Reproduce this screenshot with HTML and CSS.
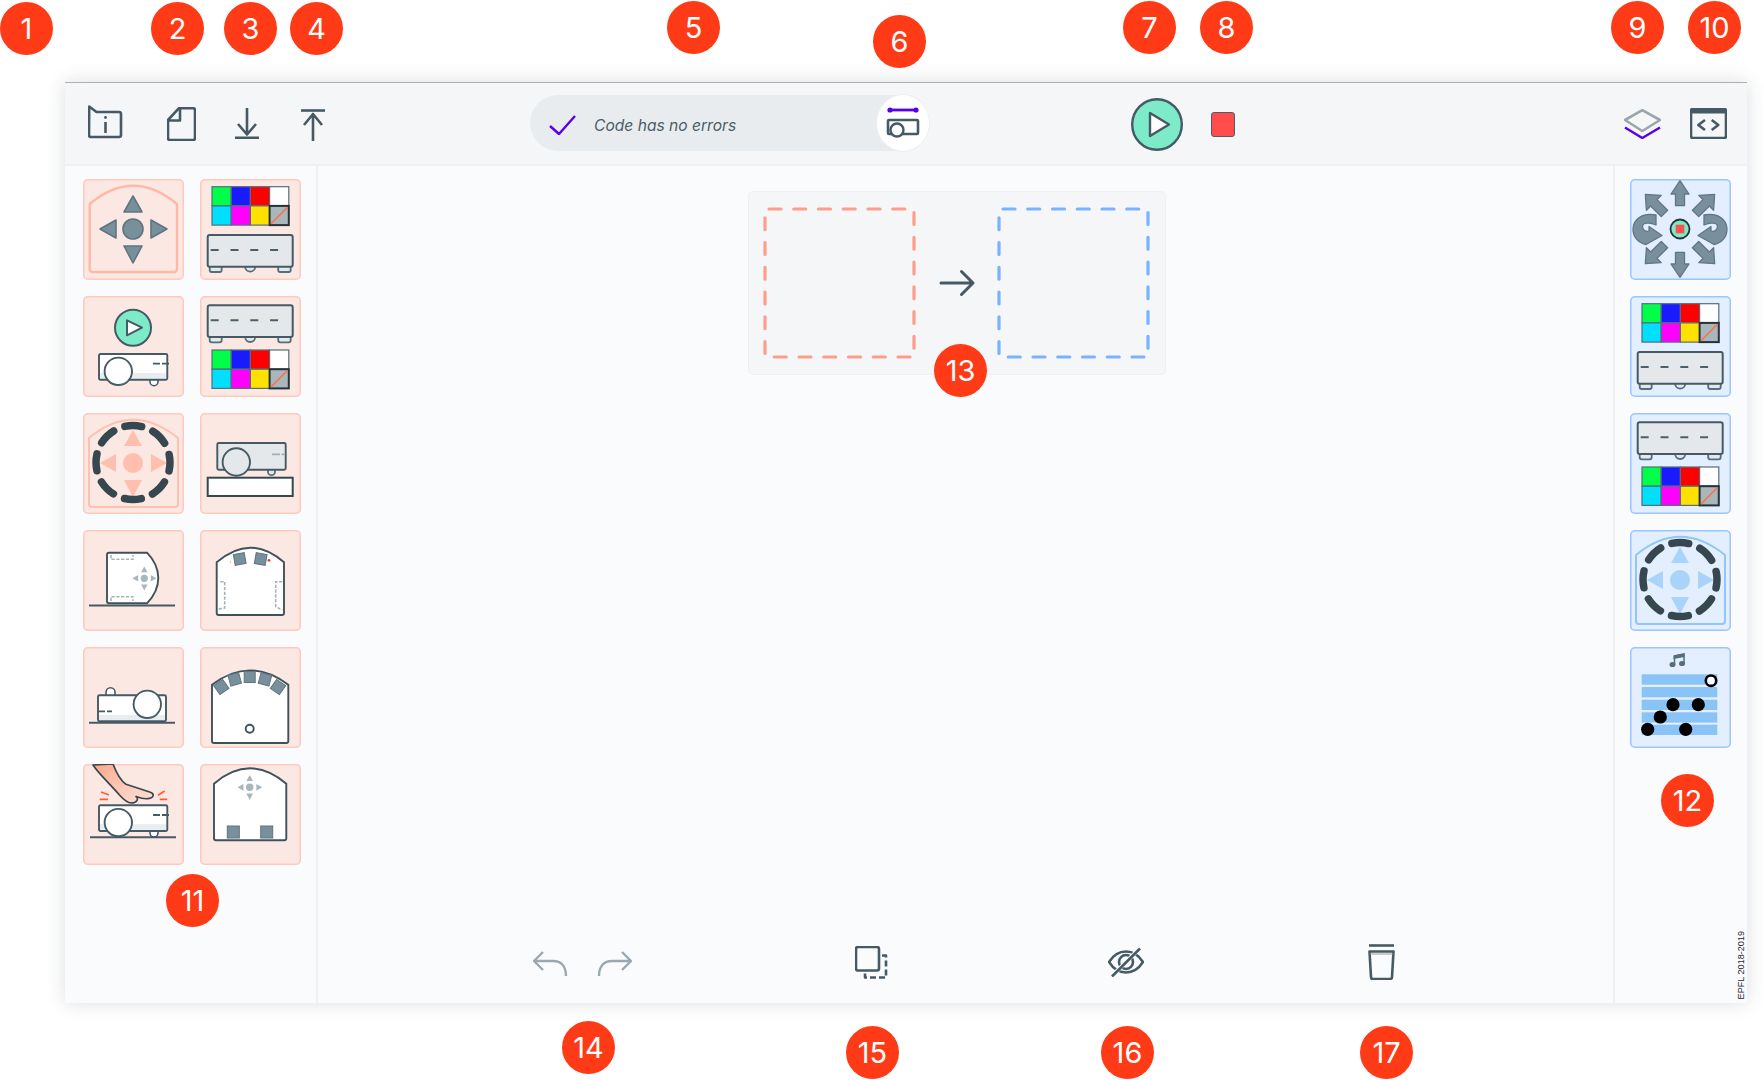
FILE: index.html
```html
<!DOCTYPE html>
<html lang="en">
<head>
<meta charset="utf-8">
<title>Thymio VPL</title>
<link rel="stylesheet" href="styles.css">
</head>
<body>
<svg class="defs" aria-hidden="true">
  <defs>
    <g id="dpad">
      <polygon points="50,17 41,33 59,33"/>
      <polygon points="50,84 41,67 59,67"/>
      <polygon points="17,50 33,41 33,59"/>
      <polygon points="84,50 68,41 68,59"/>
      <circle cx="50" cy="50" r="10"/>
    </g>
    <g id="ring">
      <circle class="ring-line" cx="50" cy="49.5" r="37"/>
    </g>
    <g id="palette">
      <rect class="c-g" x="0" y="0" width="19.2" height="19.2"/>
      <rect class="c-b" x="19.2" y="0" width="19.2" height="19.2"/>
      <rect class="c-r" x="38.4" y="0" width="19.2" height="19.2"/>
      <rect class="c-w" x="57.6" y="0" width="19.2" height="19.2"/>
      <rect class="c-c" x="0" y="19.2" width="19.2" height="19.2"/>
      <rect class="c-m" x="19.2" y="19.2" width="19.2" height="19.2"/>
      <rect class="c-y" x="38.4" y="19.2" width="19.2" height="19.2"/>
      <rect class="c-x" x="57.6" y="19.2" width="19.2" height="19.2"/>
      <line class="c-slash" x1="59" y1="37" x2="75.5" y2="20.5"/>
    </g>
    <g id="rtop">
      <path class="r-foot" d="M2,31.7 V35 a2,2 0 0 0 2,2 H12 a2,2 0 0 0 2,-2 V31.7"/>
      <path class="r-foot" d="M37.5,31.7 a5,5 0 0 0 10,0"/>
      <path class="r-foot" d="M70.5,31.7 V35 a2,2 0 0 0 2,2 H81 a2,2 0 0 0 2,-2 V31.7"/>
      <rect class="r-body" x="0" y="0" width="85" height="31.7" rx="2"/>
      <line class="r-dash" x1="3" y1="15" x2="82" y2="15"/>
    </g>
    <g id="proj">
      <path class="p-foot" d="M51,25.7 v2 a4,4 0 0 0 8,0 v-2"/>
      <rect class="p-body" x="0" y="0" width="68.3" height="25.7" rx="1.5"/>
      <path class="p-shade" d="M1,19 H67.5 V24.5 H1 Z"/>
      <rect class="p-line" x="0" y="0" width="68.3" height="25.7" rx="1.5"/>
      <circle class="p-lens" cx="19.3" cy="17.3" r="13.7"/>
      <path class="p-lensshade" d="M29,9 a13.7,13.7 0 0 1 -11,22 a14,14 0 0 0 11,-22 Z"/>
      <line class="p-dash" x1="54" y1="9.7" x2="70" y2="9.7"/>
    </g>
    <g id="arrow">
      <polygon points="0,-48.3 9,-35 4.5,-35 4.5,-23.3 -4.5,-23.3 -4.5,-35 -9,-35"/>
    </g>
    <g id="arrow-d">
      <polygon points="0,-49 10.5,-37 4.5,-37 4.5,-22 -4.5,-22 -4.5,-37 -10.5,-37"/>
    </g>
    <g id="turn">
      <path d="M74,36 C88,33 97,41 97,50 C97,58 92,64 84,65.5 L68,56.5 L81,47.5 L81,52 C84,53 87.5,51 87.5,47.5 C87.5,43.5 80,43 74,46 Z"/>
    </g>
  </defs>
</svg>

<main class="window">
  <header class="topbar">
    <svg class="ic m-info" width="35" height="34" viewBox="0 0 35 34">
      <path class="ln" d="M1.2,1.5 L8.5,7 H31 a2,2 0 0 1 2,2 V30 a2,2 0 0 1 -2,2 H3 a2,2 0 0 1 -2,-2 Z"/>
      <line class="ln" x1="17.5" y1="17" x2="17.5" y2="28"/>
      <circle class="ink" cx="17.5" cy="12.5" r="1.4"/>
    </svg>
    <svg class="ic m-doc" width="29" height="34" viewBox="0 0 29 34">
      <path class="ln" d="M12,1.2 H26 a2,2 0 0 1 2,2 V31 a2,2 0 0 1 -2,2 H3 a2,2 0 0 1 -2,-2 V13 Z"/>
      <path class="ln" d="M13,1.2 V13.5 H1"/>
    </svg>
    <svg class="ic m-down" width="24" height="31" viewBox="0 0 24 31">
      <path class="ln" d="M12,0 V26.5 M3,16 L12,26.5 L21,16"/>
      <line class="ln" x1="0" y1="29.8" x2="24" y2="29.8"/>
    </svg>
    <svg class="ic m-up" width="24" height="32" viewBox="0 0 24 32">
      <path class="ln" d="M12,32 V5 M3,16 L12,5 L21,16"/>
      <line class="ln" x1="0" y1="1.5" x2="24" y2="1.5"/>
    </svg>

    <div class="status">
      <svg class="check" width="27" height="20" viewBox="0 0 27 20">
        <path class="ln-v" d="M1,11 L10,19 L26,1"/>
      </svg>
      <span class="status-text">Code has no errors</span>
      <div class="sensor">
        <svg width="34" height="32" viewBox="0 0 34 32">
          <line class="ln-v bar" x1="5" y1="3" x2="29" y2="3"/>
          <circle class="viol" cx="4" cy="3" r="2.6"/>
          <circle class="viol" cx="30" cy="3" r="2.6"/>
          <rect class="ln" x="2" y="13" width="30" height="14" rx="1"/>
          <circle class="lens-w" cx="11" cy="23" r="6.5"/>
        </svg>
      </div>
    </div>

    <svg class="ic m-play" width="52" height="53" viewBox="0 0 52 53">
      <ellipse class="play-disc" cx="26" cy="26.5" rx="24.8" ry="25.3"/>
      <path class="play-tri" d="M19,15 V38 L38,26.5 Z"/>
    </svg>
    <div class="stop"></div>

    <svg class="ic m-layers" width="37" height="30" viewBox="0 0 37 30">
      <path class="ln-g" d="M18.3,1.2 L36,11 L18.3,22 L1,11 Z"/>
      <path class="ln-v" d="M1,18.5 L18.3,29 L36,18.5"/>
    </svg>
    <svg class="ic m-code" width="37" height="31" viewBox="0 0 37 31">
      <rect class="ln" x="1" y="1" width="35" height="29" rx="2"/>
      <rect class="ink" x="1" y="1" width="35" height="4.5"/>
      <path class="ln" d="M15,12 L8.3,17 L15,22 M21.7,12 L28.3,17 L21.7,22"/>
    </svg>
  </header>

  <div class="workspace">
    <aside class="panel-left">
      <div class="tile tile-red">
        <svg class="art" viewBox="0 0 101 101">
          <path class="dome-red" d="M6.7,25 Q50,-11.6 94,25 V90 a3,3 0 0 1 -3,3 H9.7 a3,3 0 0 1 -3,-3 Z"/>
          <use class="dp-solid" href="#dpad"/>
        </svg>
      </div>
      <div class="tile tile-red">
        <svg class="art" viewBox="0 0 101 101">
          <use href="#palette" x="12" y="7.7"/>
          <use href="#rtop" x="7.7" y="56"/>
        </svg>
      </div>
      <div class="tile tile-red">
        <svg class="art" viewBox="0 0 101 101">
          <circle class="play-disc small" cx="50" cy="31.7" r="18"/>
          <path class="play-tri small" d="M44,24.3 V39.3 L59,31.7 Z"/>
          <use href="#proj" x="16" y="58"/>
        </svg>
      </div>
      <div class="tile tile-red">
        <svg class="art" viewBox="0 0 101 101">
          <use href="#rtop" x="7.7" y="9.3"/>
          <use href="#palette" x="12" y="54"/>
        </svg>
      </div>
      <div class="tile tile-red">
        <svg class="art" viewBox="0 0 101 101">
          <path class="dome-red-thin" d="M6,25 Q50,-11.6 95,25 V91 a3,3 0 0 1 -3,3 H9 a3,3 0 0 1 -3,-3 Z"/>
          <use class="dp-pale-red" href="#dpad"/>
          <use href="#ring"/>
        </svg>
      </div>
      <div class="tile tile-red">
        <svg class="art" viewBox="0 0 101 101">
          <path class="r-foot" d="M68,56.7 v2 a3.5,3.5 0 0 0 7,0 v-2"/>
          <rect class="f-body" x="17.3" y="30" width="68.4" height="26.7" rx="1.5"/>
          <circle class="f-body" cx="36.3" cy="49" r="13.7"/>
          <line class="f-dash" x1="72" y1="41.3" x2="84.5" y2="41.3"/>
          <rect class="box" x="7.7" y="64.7" width="85" height="18.3"/>
        </svg>
      </div>
      <div class="tile tile-red">
        <svg class="art" viewBox="0 0 101 101">
          <path class="d-body" d="M26,22.7 H64 C72,31 75.3,39 75.3,48 C75.3,57 72,65 64,73.3 H26 a2,2 0 0 1 -2,-2 V24.7 a2,2 0 0 1 2,-2 Z"/>
          <path class="g-dash" d="M28,25 V29.3 H50 V25 M28,71 V66.7 H50 V71"/>
          <use class="dp-gray" href="#dpad" transform="translate(61.3,48.3) scale(.36) translate(-50,-50)"/>
          <line class="ground" x1="6" y1="75.5" x2="92" y2="75.5"/>
        </svg>
      </div>
      <div class="tile tile-red">
        <svg class="art" viewBox="0 0 101 101">
          <path class="d-body" d="M16.7,32.3 Q50.3,3 84,32.3 V83 a2,2 0 0 1 -2,2 H18.7 a2,2 0 0 1 -2,-2 Z"/>
          <rect class="sq" x="34.2" y="23.5" width="11" height="11" transform="rotate(-10 39.7 29)"/>
          <rect class="sq" x="55.2" y="23.5" width="11" height="11" transform="rotate(10 60.7 29)"/>
          <circle class="led" cx="69" cy="30.3" r="1.4"/>
          <circle class="led" cx="30.3" cy="32" r=".5"/>
          <path class="g-dash" d="M20.3,51.7 H24.7 V78 L18,79 M82.3,51.7 H75.7 V76.7 L82.3,80"/>
        </svg>
      </div>
      <div class="tile tile-red">
        <svg class="art" viewBox="0 0 101 101">
          <path class="p-foot" d="M23,48.3 v-3 a4.5,4.5 0 0 1 9,0 v3"/>
          <rect class="p-body" x="15" y="48.3" width="68" height="26" rx="1.5"/>
          <path class="p-shade" d="M16,68 H82 V73.3 H16 Z"/>
          <rect class="p-line" x="15" y="48.3" width="68" height="26" rx="1.5"/>
          <circle class="p-lens" cx="64.3" cy="57.3" r="13.7"/>
          <path class="p-lensshade" d="M74,49 a13.7,13.7 0 0 1 -11,22 a14,14 0 0 0 11,-22 Z"/>
          <line class="p-dash" x1="15" y1="64.3" x2="29" y2="64.3"/>
          <line class="ground" x1="6" y1="75.7" x2="92" y2="75.7"/>
        </svg>
      </div>
      <div class="tile tile-red">
        <svg class="art" viewBox="0 0 101 101">
          <path class="d-body" d="M12,37.7 Q50,9 88.3,37.7 V94 a2,2 0 0 1 -2,2 H14 a2,2 0 0 1 -2,-2 Z"/>
          <rect class="sq" x="15.8" y="34.5" width="11" height="11" transform="rotate(-35 21.3 40)"/>
          <rect class="sq" x="29.2" y="26.8" width="11" height="11" transform="rotate(-15 34.7 32.3)"/>
          <rect class="sq" x="44.2" y="24.5" width="11" height="11"/>
          <rect class="sq" x="59.5" y="26.8" width="11" height="11" transform="rotate(15 65 32.3)"/>
          <rect class="sq" x="72.5" y="34.5" width="11" height="11" transform="rotate(35 78 40)"/>
          <circle class="d-body" cx="49.7" cy="81.7" r="4"/>
        </svg>
      </div>
      <div class="tile tile-red">
        <svg class="art" viewBox="0 0 101 101">
          <defs>
            <linearGradient id="hand-fill" x1="0" y1="0" x2="1" y2="1">
              <stop offset="0" stop-color="#ffa68a"/>
              <stop offset=".55" stop-color="#ffc9b6"/>
              <stop offset="1" stop-color="#fde0d6"/>
            </linearGradient>
          </defs>
          <path class="hand" d="M10,1 C16,10 25,18 36.7,31.3 C40,35 44,39 48.3,39 C54,39 56,34.7 53,32.5 C57,34 62,35 65,34.7 C71,34 72,29.5 66.7,28 L43,20.3 C38,17 33,8 30,0 Z"/>
          <path class="spark" d="M18,28 L26,31 M16.7,35.3 H25 M75,31.3 L81.7,27 M76.7,35.3 H84.3"/>
          <use href="#proj" x="16" y="41.3"/>
          <line class="ground" x1="7" y1="73.3" x2="93" y2="73.3"/>
        </svg>
      </div>
      <div class="tile tile-red">
        <svg class="art" viewBox="0 0 101 101">
          <path class="d-body" d="M14,19.7 Q50,-11 86.3,19.7 V74.3 a2,2 0 0 1 -2,2 H16 a2,2 0 0 1 -2,-2 Z"/>
          <use class="dp-gray" href="#dpad" transform="translate(49.7,23.3) scale(.37) translate(-50,-50)"/>
          <rect class="sq" x="27.3" y="62" width="12" height="12"/>
          <rect class="sq" x="60.7" y="62" width="12" height="12"/>
        </svg>
      </div>
    </aside>

    <section class="canvas">
      <div class="rule-card">
        <svg class="drop" width="153" height="152" viewBox="0 0 153 152">
          <rect class="dash-red" x="2" y="2" width="149" height="148"/>
        </svg>
        <svg class="rule-arrow" width="81" height="152" viewBox="0 0 81 152">
          <path class="ln-arrow" d="M25,76 H57 M45.5,64.5 L57,76 L45.5,87.5"/>
        </svg>
        <svg class="drop" width="153" height="152" viewBox="0 0 153 152">
          <rect class="dash-blue" x="2" y="2" width="149" height="148"/>
        </svg>
      </div>
      <div class="bottombar">
        <svg class="b-undo" width="35" height="25" viewBox="0 0 35 25">
          <path class="ln-off" d="M10,1 L1,10 L10,19 M1,10 H20 C28,10 33,15 33,25"/>
        </svg>
        <svg class="b-redo" width="35" height="25" viewBox="0 0 35 25">
          <path class="ln-off" d="M25,1 L34,10 L25,19 M34,10 H15 C7,10 2,15 2,25"/>
        </svg>
        <svg class="b-dup" width="33" height="33" viewBox="0 0 33 33">
          <rect class="ln" x="1" y="1" width="23" height="23.5" rx="2"/>
          <path class="ln dashes" d="M27,9.5 H31 V31.5 H10 V26"/>
        </svg>
        <svg class="b-eye" width="36" height="30" viewBox="0 0 36 30">
          <path class="ln" d="M1,15 C6,7 12,4.5 18,4.5 C24,4.5 30,7 35,15 C30,23 24,25.5 18,25.5 C12,25.5 6,23 1,15 Z"/>
          <circle class="ln" cx="18" cy="15" r="7"/>
          <line class="ln-cut" x1="4" y1="29" x2="32" y2="1"/>
          <line class="ln" x1="4" y1="29.5" x2="32" y2="1.5"/>
        </svg>
        <svg class="b-trash" width="27" height="36" viewBox="0 0 27 36">
          <line class="ln" x1="1" y1="1.5" x2="26" y2="1.5"/>
          <path class="ln" d="M1.5,7.5 H25.5 L24,33 a2,2 0 0 1 -2,2 H5 a2,2 0 0 1 -2,-2 Z"/>
          <line class="ln-thin" x1="2" y1="10" x2="25" y2="10"/>
        </svg>
      </div>
    </section>

    <aside class="panel-right">
      <div class="tile tile-blue">
        <svg class="art" viewBox="0 0 101 101">
          <g class="arrows">
            <use href="#arrow" transform="translate(50,50)"/>
            <use href="#arrow-d" transform="translate(50,50) rotate(45)"/>
            <use href="#arrow-d" transform="translate(50,50) rotate(135)"/>
            <use href="#arrow" transform="translate(50,50) rotate(180)"/>
            <use href="#arrow-d" transform="translate(50,50) rotate(225)"/>
            <use href="#arrow-d" transform="translate(50,50) rotate(315)"/>
            <use href="#turn"/>
            <use href="#turn" transform="translate(100,0) scale(-1,1)"/>
          </g>
          <circle class="core" cx="50" cy="50" r="9.5"/>
          <rect class="core-sq" x="45.7" y="45.7" width="8.6" height="8.6"/>
        </svg>
      </div>
      <div class="tile tile-blue">
        <svg class="art" viewBox="0 0 101 101">
          <use href="#palette" x="12" y="7.7"/>
          <use href="#rtop" x="7.7" y="56"/>
        </svg>
      </div>
      <div class="tile tile-blue">
        <svg class="art" viewBox="0 0 101 101">
          <use href="#rtop" x="7.7" y="9.3"/>
          <use href="#palette" x="12" y="54"/>
        </svg>
      </div>
      <div class="tile tile-blue">
        <svg class="art" viewBox="0 0 101 101">
          <path class="dome-blue" d="M6,25 Q50,-11.6 95,25 V91 a3,3 0 0 1 -3,3 H9 a3,3 0 0 1 -3,-3 Z"/>
          <use class="dp-pale-blue" href="#dpad"/>
          <use href="#ring"/>
        </svg>
      </div>
      <div class="tile tile-blue">
        <svg class="art" viewBox="0 0 101 101">
          <path class="note" d="M44,9 L54,7 V17"/>
          <path class="beam" d="M43.5,8.5 L54.5,6.5 V10 L43.5,12 Z"/>
          <ellipse class="note-head" cx="42.5" cy="17.5" rx="3" ry="2.6"/>
          <ellipse class="note-head" cx="52" cy="16.5" rx="3" ry="2.6"/>
          <line class="note" x1="44.5" y1="9" x2="44.5" y2="17"/>
          <rect class="stripe" x="11.7" y="27.3" width="75.6" height="10.4"/>
          <rect class="stripe" x="11.7" y="40" width="75.6" height="10.3"/>
          <rect class="stripe" x="11.7" y="52.7" width="75.6" height="10.3"/>
          <rect class="stripe" x="11.7" y="65.3" width="75.6" height="10.3"/>
          <rect class="stripe" x="11.7" y="77.7" width="75.6" height="10.3"/>
          <circle class="dot" cx="43" cy="57.7" r="6.6"/>
          <circle class="dot" cx="68.3" cy="57.7" r="6.6"/>
          <circle class="dot" cx="30.3" cy="70" r="6.6"/>
          <circle class="dot" cx="17.7" cy="82.3" r="6.6"/>
          <circle class="dot" cx="55.7" cy="82.3" r="6.6"/>
          <circle class="dot-open" cx="81" cy="33.7" r="5.2"/>
        </svg>
      </div>
      <div class="copyright">EPFL 2018-2019</div>
    </aside>
  </div>
</main>

<span class="badge b1">1</span>
<span class="badge b2">2</span>
<span class="badge b3">3</span>
<span class="badge b4">4</span>
<span class="badge b5">5</span>
<span class="badge b6">6</span>
<span class="badge b7">7</span>
<span class="badge b8">8</span>
<span class="badge b9">9</span>
<span class="badge b10">10</span>
<span class="badge b11">11</span>
<span class="badge b12">12</span>
<span class="badge b13">13</span>
<span class="badge b14">14</span>
<span class="badge b15">15</span>
<span class="badge b16">16</span>
<span class="badge b17">17</span>
</body>
</html>
```

FILE: styles.css
```css
* { box-sizing: border-box; }

html, body {
  margin: 0;
  width: 1764px;
  height: 1080px;
  overflow: hidden;
  background: #fff;
  font-family: Inter, "Liberation Sans", sans-serif;
}

body { position: relative; padding: 82px 0 0 65px; }

svg { display: block; flex: none; }
.defs { display: none; }

/* window */
.window {
  width: 1682px;
  height: 921px;
  display: flex;
  flex-direction: column;
  background: #fafbfd;
  border-top: 1px solid #adafb0;
  box-shadow: 0 0 18px rgba(40, 50, 60, .16);
}

/* top bar */
.topbar {
  flex: none;
  height: 83px;
  display: flex;
  align-items: center;
  background: #f5f6f8;
  border-bottom: 2px solid #eef0f3;
  padding-right: 20px;
}

.m-info { margin-left: 23px; margin-bottom: 3px; }
.m-doc { margin-left: 44px; margin-top: 1px; }
.m-down { margin-bottom: 1px; margin-left: 39px; }
.m-up { margin-left: 42px; margin-top: 3px; }
.m-play { margin-left: 202px; margin-top: 1px; }
.m-layers { margin-left: auto; }
.m-code { margin-left: 29px; }

.status {
  margin-left: 205px;
  margin-bottom: 1px;
  width: 399px;
  height: 56px;
  display: flex;
  align-items: center;
  border-radius: 28px;
  background: #e9ecef;
}
.check { margin-left: 19px; margin-top: 3px; }
.status-text {
  margin-left: 18px;
  margin-top: 4px;
  font-size: 15.6px;
  font-style: italic;
  color: #4c5c66;
  white-space: nowrap;
}
.sensor {
  margin-left: auto;
  width: 52px;
  height: 56px;
  display: flex;
  align-items: center;
  justify-content: center;
  border-radius: 50%;
  background: #fff;
  box-shadow: 0 0 0 1px #eceef0;
}

.stop {
  flex: none;
  margin-left: 28px;
  margin-top: 2px;
  width: 24px;
  height: 25px;
  border-radius: 3px;
  background: #ff4d4d;
  border: 1.5px solid #4b5f6a;
}

/* workspace */
.workspace { flex: 1; min-height: 0; display: flex; }

.panel-left {
  flex: none;
  width: 253px;
  padding: 13px 16px 0 18px;
  border-right: 2px solid #eef0f3;
  display: grid;
  grid-template-columns: 101px 101px;
  grid-auto-rows: 101px;
  gap: 16px;
}

.panel-right {
  flex: none;
  width: 134px;
  padding: 13px 0 4px 15px;
  border-left: 2px solid #eef0f3;
  display: flex;
  flex-direction: column;
  gap: 16px;
}

.tile { flex: none; width: 101px; height: 101px; border-radius: 5px; }
.tile-red { background: #fce8e3; box-shadow: inset 0 0 0 1.5px #ffc9bd; }
.tile-blue { background: #e3eeff; box-shadow: inset 0 0 0 1.5px #9cc6ff; }
.art { width: 101px; height: 101px; }

.copyright {
  margin-top: auto;
  align-self: flex-end;
  writing-mode: vertical-rl;
  transform: rotate(180deg);
  font-family: "Liberation Sans", Arial, sans-serif;
  font-size: 9.1px;
  line-height: 11px;
  color: #1c252a;
  white-space: nowrap;
}

/* canvas */
.canvas {
  flex: 1;
  min-width: 0;
  display: flex;
  flex-direction: column;
}

.rule-card {
  margin: 25px 0 0 430px;
  width: 418px;
  height: 184px;
  padding: 15px 14px;
  display: flex;
  border: 1px solid #eff0f2;
  border-radius: 5px;
  background: #f5f6f8;
}

.bottombar {
  margin-top: auto;
  padding: 0 0 23px 215px;
  display: flex;
  align-items: center;
}
.b-redo { margin-left: 29px; margin-top: 2px; }
.b-undo { margin-top: 2px; }
.b-dup { margin-left: 223px; }
.b-eye { margin-left: 220px; }
.b-trash { margin-left: 224px; }

/* line styles */
.ln, .ln-v, .ln-g, .ln-off, .ln-arrow, .ln-thin, .ln-cut {
  fill: none;
  stroke-linejoin: round;
}
.ln { stroke: #455a64; stroke-width: 2.6; }
.ln-thin { stroke: #8d9ca5; stroke-width: 1; }
.ln-cut { stroke: #fafbfd; stroke-width: 4; }
.ln-v { stroke: #5a00e6; stroke-width: 2.4; }
.ln-v.bar { stroke-width: 2.8; }
.ln-g { stroke: #9aa6ac; stroke-width: 2.6; }
.ln-off { stroke: #9ba8af; stroke-width: 2.4; }
.ln-arrow { stroke: #455a64; stroke-width: 3; stroke-linecap: round; }
.ink { fill: #455a64; }
.viol { fill: #5a00e6; }
.lens-w { fill: #fff; stroke: #455a64; stroke-width: 2.4; }
.dashes { stroke-dasharray: 6 3; }

.play-disc { fill: #7debc8; stroke: #455a64; stroke-width: 2.4; }
.play-tri { fill: #fff; stroke: #455a64; stroke-width: 2.4; stroke-linejoin: round; }
.play-disc.small, .play-tri.small { stroke-width: 2; }

.dash-red, .dash-blue {
  fill: none;
  stroke-width: 3.2;
  stroke-linecap: round;
  stroke-dasharray: 12 12.75;
  stroke-dashoffset: 20.75;
}
.dash-red { stroke: #ff9d8b; }
.dash-blue { stroke: #79b2ff; }

/* tile art */
.dome-red { fill: none; stroke: #ffb8a6; stroke-width: 2.4; }
.dome-red-thin { fill: none; stroke: #ffc0af; stroke-width: 2; }
.dome-blue { fill: none; stroke: #92c6fa; stroke-width: 2; }
.dp-solid { fill: #78909c; stroke: #5f7482; stroke-width: 1.6; stroke-linejoin: round; }
.dp-pale-red { fill: #ffbfae; }
.dp-pale-blue { fill: #a8d3fa; }
.dp-gray { fill: #aab6bd; }
.ring-line {
  fill: none;
  stroke: #37474f;
  stroke-width: 7.5;
  stroke-linecap: round;
  stroke-dasharray: 17 12.06;
  stroke-dashoffset: 8.5;
}

.c-g, .c-b, .c-r, .c-w, .c-c, .c-m, .c-y { stroke: #546e7a; stroke-width: 1.2; }
.c-g { fill: #00ff48; }
.c-b { fill: #1a1aff; }
.c-r { fill: #ff0000; }
.c-w { fill: #fff; }
.c-c { fill: #00dfff; }
.c-m { fill: #ff00ff; }
.c-y { fill: #ffe100; }
.c-x { fill: #a9b6bc; stroke: #263238; stroke-width: 2; }
.c-slash { stroke: #ff7043; stroke-width: 1.6; }

.r-body { fill: #e4e8ea; stroke: #455a64; stroke-width: 2; }
.r-foot { fill: #e4e8ea; stroke: #546e7a; stroke-width: 1.8; }
.r-dash { stroke: #4c606b; stroke-width: 2; stroke-dasharray: 8 11.8; }

.p-foot { fill: #fff; stroke: #455a64; stroke-width: 1.6; }
.p-body { fill: #fff; }
.p-shade { fill: #e9edef; }
.p-line { fill: none; stroke: #455a64; stroke-width: 1.9; }
.p-lens { fill: #fff; stroke: #455a64; stroke-width: 1.9; }
.p-lensshade { fill: #dfe4e7; }
.p-dash { stroke: #455a64; stroke-width: 1.8; stroke-dasharray: 7 2; }

.f-body { fill: #e4e8ea; stroke: #455a64; stroke-width: 1.9; }
.f-dash { stroke: #a2afb6; stroke-width: 1.8; stroke-dasharray: 8 1.5; }
.box { fill: #fff; stroke: #37474f; stroke-width: 2; }

.d-body { fill: #fff; stroke: #3f525c; stroke-width: 1.9; }
.g-dash { fill: none; stroke: #a5b2b9; stroke-width: 1.6; stroke-dasharray: 3.2 1.6; }
.ground { stroke: #455a64; stroke-width: 1.9; }
.sq { fill: #78909c; stroke: #5f7482; stroke-width: 1; }
.led { fill: #ff3a17; }

.hand { fill: url(#hand-fill); stroke: #37474f; stroke-width: 1.7; stroke-linejoin: round; }
.spark { fill: none; stroke: #ff5a36; stroke-width: 1.7; }

.arrows { fill: #7a8f9c; stroke: #5f7684; stroke-width: 1.3; stroke-linejoin: round; }
.core { fill: #7debc8; stroke: #263238; stroke-width: 1.8; }
.core-sq { fill: #ff5050; }

.stripe { fill: #8ac3f5; }
.dot { fill: #000; }
.dot-open { fill: #fff; stroke: #000; stroke-width: 2.6; }
.note { fill: none; stroke: #546e7a; stroke-width: 1.5; }
.beam, .note-head { fill: #546e7a; }

/* callout badges */
.badge {
  position: absolute;
  width: 53px;
  height: 53px;
  display: flex;
  align-items: center;
  justify-content: center;
  border-radius: 50%;
  background: #ff3a17;
  color: #fff;
  font-size: 29px;
  line-height: 1;
}
.b1 { left: 0; top: 2px; }
.b2 { left: 151px; top: 2px; }
.b3 { left: 224px; top: 2px; }
.b4 { left: 290px; top: 2px; }
.b5 { left: 667px; top: 1px; }
.b6 { left: 873px; top: 15px; }
.b7 { left: 1123px; top: 1px; }
.b8 { left: 1200px; top: 1px; }
.b9 { left: 1611px; top: 1px; }
.b10 { left: 1688px; top: 1px; }
.b11 { left: 166px; top: 874px; }
.b12 { left: 1661px; top: 774px; }
.b13 { left: 934px; top: 344px; }
.b14 { left: 562px; top: 1021px; }
.b15 { left: 846px; top: 1026px; }
.b16 { left: 1101px; top: 1026px; }
.b17 { left: 1360px; top: 1026px; }
```
